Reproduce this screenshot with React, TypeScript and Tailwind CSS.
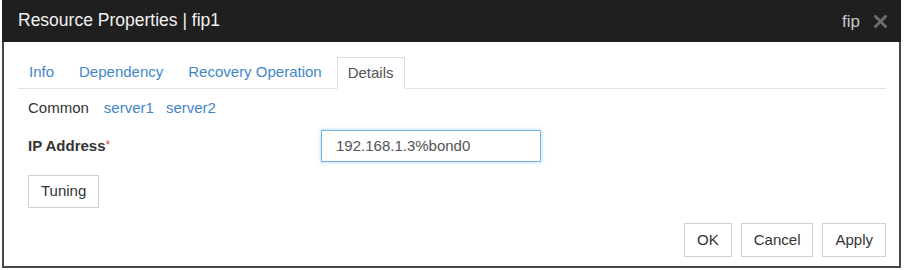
export default function App() {
  const font = { fontFamily: '"Liberation Sans", Arial, sans-serif' };
  return (
    <div className="w-[904px] h-[270px] bg-white" style={font}>
      <div className="ml-[2px] w-[899px] h-[268px] flex flex-col border-x-2 border-b-2 border-[#474747]">
        {/* Header */}
        <div className="h-[42px] bg-[#1f1f1f] flex items-center justify-between pl-[16px] pr-[14px] -mx-[2px]">
          <span className="text-[17.5px] text-[#f2f2f2] leading-none">Resource Properties | fip1</span>
          <div className="flex items-center gap-[14px]">
            <span className="text-[17px] text-[#c8c8c8] leading-none">fip</span>
            <svg width="13" height="13" viewBox="0 0 13 13">
              <path d="M1.5 1.5 L11.5 11.5 M11.5 1.5 L1.5 11.5" stroke="#6b6b6b" strokeWidth="3" strokeLinecap="square" />
            </svg>
          </div>
        </div>

        {/* Content */}
        <div className="flex-1 flex flex-col pt-[15px] pl-[14px] pr-[13px]">
          {/* Tabs */}
          <div className="flex items-end gap-[5px] border-b border-[#e3e3e3] h-[32px] pl-[1px]">
            {['Info', 'Dependency', 'Recovery Operation'].map((t) => (
              <div key={t} className="h-[31px] px-[10px] flex items-center text-[15px] text-[#3f87c9]">
                {t}
              </div>
            ))}
            <div className="h-[32px] -mb-px px-[10px] flex items-center text-[15px] text-[#555] bg-white border border-b-white border-[#dddddd]">
              Details
            </div>
          </div>

          {/* Server tabs */}
          <div className="mt-[9px] h-[20px] flex items-center text-[15px] pl-[10px]">
            <span className="text-[#333] mr-[15px]">Common</span>
            <span className="text-[#3f87c9] mr-[12px]">server1</span>
            <span className="text-[#3f87c9]">server2</span>
          </div>

          {/* IP Address */}
          <div className="mt-[12px] flex items-center pl-[10px]">
            <div className="w-[293px] text-[15px] font-bold text-[#333]">
              IP Address<sup className="text-[#e04a3a] font-normal text-[12px] relative -top-[2px]">*</sup>
            </div>
            <div className="w-[220px] h-[32px] flex items-center px-[14px] border border-[#74b2ea] shadow-[0_0_4px_rgba(102,175,233,0.55)] text-[15px] text-[#555]">
              192.168.1.3%bond0
            </div>
          </div>

          {/* Tuning */}
          <div className="mt-[13px] pl-[10px]">
            <button className="h-[33px] px-[12px] border border-[#d0d0d0] text-[15px] text-[#333] bg-white">
              Tuning
            </button>
          </div>

          {/* Footer buttons */}
          <div className="mt-[15px] flex justify-end gap-[9px]">
            {['OK', 'Cancel', 'Apply'].map((b) => (
              <button key={b} className="h-[34px] px-[12px] border border-[#d0d0d0] text-[15px] text-[#333] bg-white">
                {b}
              </button>
            ))}
          </div>
        </div>
      </div>
    </div>
  );
}
